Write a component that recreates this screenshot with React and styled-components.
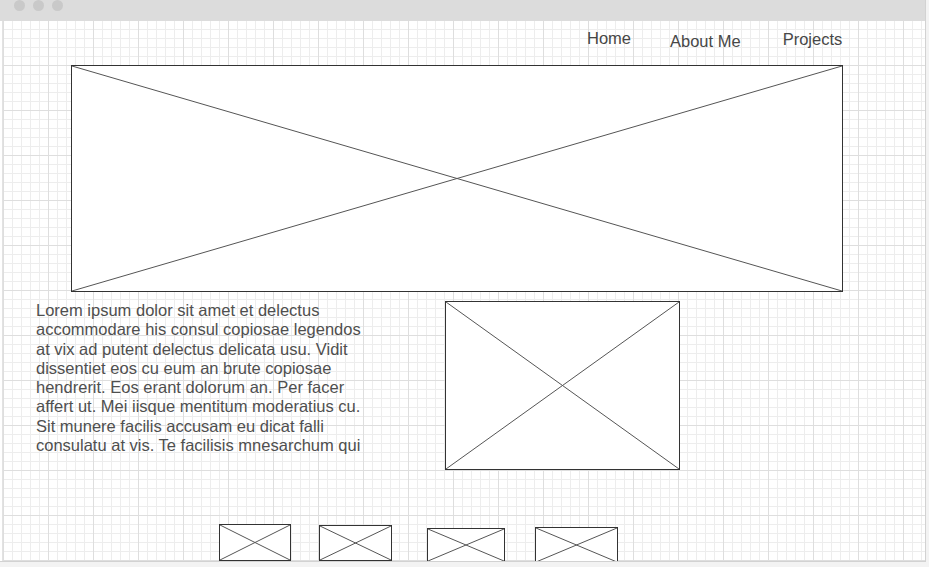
import React from "react";
import styled, { createGlobalStyle } from "styled-components";

const Global = createGlobalStyle`
  html, body { margin: 0; padding: 0; background: #f3f3f3; }
  body { font-family: "Liberation Sans", Arial, sans-serif; }
  #root { width: 929px; height: 567px; overflow: hidden; }
`;

const Frame = styled.div`
  width: 925px;
  height: 561px;
  border-right: 1px solid #d2d2d2;
  border-bottom: 1px solid #d2d2d2;
  background: #fff;
  display: flex;
  flex-direction: column;
  overflow: hidden;
`;

const TitleBar = styled.div`
  height: 21px;
  flex: none;
  background: #dcdcdc;
  display: flex;
  align-items: flex-start;
  gap: 8px;
  padding-left: 14px;
`;

const Dot = styled.span`
  width: 11px;
  height: 11px;
  border-radius: 50%;
  background: #c9c9c9;
`;

const Canvas = styled.div`
  flex: 1;
  position: relative;
  overflow: hidden;
  border-left: 1px solid #e2e2e2;
  margin-left: 2px;
  background-color: #fff;
  background-image:
    linear-gradient(to right, #dedede 1px, transparent 1px),
    linear-gradient(to bottom, #dedede 1px, transparent 1px),
    linear-gradient(to right, #ededed 1px, transparent 1px),
    linear-gradient(to bottom, #ededed 1px, transparent 1px);
  background-size: 45px 45px, 45px 45px, 9px 9px, 9px 9px;
  background-position: 0px -1px, 0px -1px, 0px -1px, 0px -1px;
  display: flex;
  flex-direction: column;
`;

const Nav = styled.nav`
  height: 44px;
  flex: none;
  display: flex;
  align-items: flex-start;
`;

const NavLink = styled.span`
  font-size: 16.5px;
  line-height: 18px;
  color: #474747;
  white-space: nowrap;
  margin-left: ${(p) => p.$ml}px;
  margin-top: ${(p) => p.$mt}px;
`;

const Placeholder = styled.div`
  box-sizing: border-box;
  flex: none;
  width: ${(p) => p.$w}px;
  height: ${(p) => p.$h}px;
  margin-left: ${(p) => p.$ml || 0}px;
  margin-top: ${(p) => p.$mt || 0}px;
  border: 1px solid #333;
  background: #fff;
  position: relative;
  svg {
    position: absolute;
    inset: 0;
    width: 100%;
    height: 100%;
    display: block;
  }
`;

const ContentRow = styled.div`
  display: flex;
  align-items: flex-start;
  margin-top: 9px;
  flex: none;
`;

const Paragraph = styled.p`
  margin: 0 0 0 33px;
  width: 409px;
  font-size: 16.5px;
  line-height: 19.3px;
  color: #4f4f4f;
  white-space: nowrap;
`;

const ThumbRow = styled.div`
  display: flex;
  align-items: flex-start;
  margin-top: 54px;
  flex: none;
`;

const Cross = () => (
  <svg viewBox="0 0 100 100" preserveAspectRatio="none">
    <line x1="0" y1="0" x2="100" y2="100" stroke="#555" strokeWidth="1" vectorEffect="non-scaling-stroke" />
    <line x1="100" y1="0" x2="0" y2="100" stroke="#555" strokeWidth="1" vectorEffect="non-scaling-stroke" />
  </svg>
);

const ImageBox = (props) => (
  <Placeholder {...props}>
    <Cross />
  </Placeholder>
);

const lines = [
  "Lorem ipsum dolor sit amet et delectus",
  "accommodare his consul copiosae legendos",
  "at vix ad putent delectus delicata usu. Vidit",
  "dissentiet eos cu eum an brute copiosae",
  "hendrerit. Eos erant dolorum an. Per facer",
  "affert ut. Mei iisque mentitum moderatius cu.",
  "Sit munere facilis accusam eu dicat falli",
  "consulatu at vis. Te facilisis mnesarchum qui",
];

export default function App() {
  return (
    <>
      <Global />
      <Frame>
        <TitleBar>
          <Dot />
          <Dot />
          <Dot />
        </TitleBar>
        <Canvas>
          <Nav>
            <NavLink $ml={584} $mt={8}>Home</NavLink>
            <NavLink $ml={39} $mt={11}>About Me</NavLink>
            <NavLink $ml={42} $mt={9}>Projects</NavLink>
          </Nav>
          <ImageBox $w={772} $h={227} $ml={68} />
          <ContentRow>
            <Paragraph>
              {lines.map((l, i) => (
                <React.Fragment key={i}>
                  {l}
                  {i < lines.length - 1 && <br />}
                </React.Fragment>
              ))}
            </Paragraph>
            <ImageBox $w={235} $h={169} $ml={0} />
          </ContentRow>
          <ThumbRow>
            <ImageBox $w={72} $h={37} $ml={216} $mt={0} />
            <ImageBox $w={73} $h={36} $ml={28} $mt={1} />
            <ImageBox $w={78} $h={34} $ml={35} $mt={4} />
            <ImageBox $w={83} $h={36} $ml={30} $mt={3} />
          </ThumbRow>
        </Canvas>
      </Frame>
    </>
  );
}
